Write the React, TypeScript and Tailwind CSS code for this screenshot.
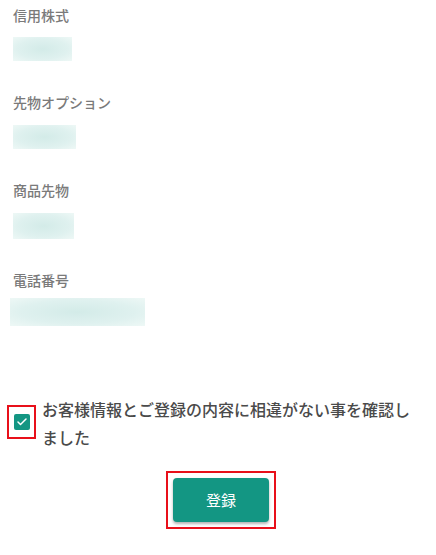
import { Check } from 'lucide-react'

const fields = [
    { label: '信用株式', w: 'w-[59px]', h: 'h-[24px]', mt: 'mt-[12px]' },
    { label: '先物オプション', w: 'w-[63px]', h: 'h-[24px]', mt: 'mt-[13px]' },
    { label: '商品先物', w: 'w-[61px]', h: 'h-[26px]', mt: 'mt-[13px]' },
    { label: '電話番号', w: 'w-[135px]', h: 'h-[28px]', mt: 'mt-[8px]', ml: '-ml-[3px]' },
]

export default function App() {
    return (
        <div
            className="w-[436px] h-[555px] bg-white overflow-hidden"
            style={{ fontFamily: '"Noto Sans CJK JP", "Noto Sans", sans-serif' }}
        >
            <div className="pt-[5px] px-[13px] flex flex-col gap-[31px]">
                {fields.map(f => (
                    <div key={f.label} className="flex flex-col">
                        <span className="text-[14px] leading-[20px] text-[#7a7a7a] font-medium">
                            {f.label}
                        </span>
                        {/* redacted value */}
                        <div
                            className={`${f.w} ${f.h} ${f.mt} ${f.ml ?? ''} bg-[radial-gradient(ellipse_at_center,#d3ebe8_0%,#dff1ef_60%,#eef8f6_100%)] blur-[0.6px]`}
                        />
                    </div>
                ))}
            </div>

            {/* confirmation checkbox */}
            <div className="mt-[69px] flex items-start pl-[7px] pr-3">
                <div className="mt-[10px] w-[29px] h-[34px] border-2 border-[#e8101a] flex items-center justify-center shrink-0">
                    <div className="w-[16px] h-[16px] rounded-[2px] bg-[#139683] flex items-center justify-center">
                        <Check className="w-[12px] h-[12px] text-white" strokeWidth={3} />
                    </div>
                </div>
                <p className="ml-[6px] text-[16px] leading-[28px] text-[#4a4a4a] font-medium">
                    お客様情報とご登録の内容に相違がない事を確認しました
                </p>
            </div>

            {/* submit */}
            <div className="mt-[20px] flex justify-center pl-[6px]">
                <div className="border-2 border-[#e8101a] p-[5px]">
                    <button className="w-[96px] h-[44px] rounded-[4px] bg-[#139683] text-white text-[15px] shadow-[0_2px_3px_rgba(0,0,0,0.3)]">
                        登録
                    </button>
                </div>
            </div>
        </div>
    )
}
